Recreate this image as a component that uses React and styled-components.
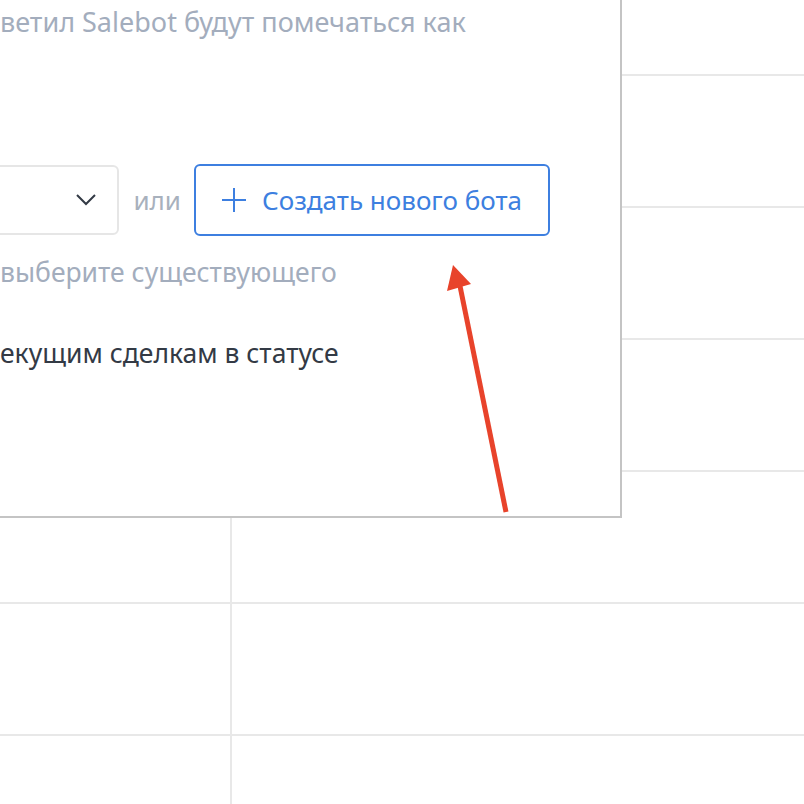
import styled, { createGlobalStyle } from "styled-components";

const GlobalStyle = createGlobalStyle`
    html, body {
        margin: 0;
        padding: 0;
        background: #ffffff;
        overflow: hidden;
    }
    body {
        font-family: "Noto Sans", "Open Sans", sans-serif;
        color: #333a45;
    }
`;

const Page = styled.div`
    position: relative;
    width: 804px;
    height: 804px;
    overflow: hidden;
`;

// pipeline board behind the dialog
const Board = styled.div`
    display: grid;
    grid-template-columns: 230px 1fr;
    grid-template-rows: 74px repeat(6, 130px);
    gap: 2px;
    background: #e8e8e8;
`;

const Cell = styled.div`
    background: #ffffff;
`;

const Dialog = styled.div`
    position: absolute;
    left: -300px;
    top: -60px;
    width: 922px;
    box-sizing: border-box;
    background: #ffffff;
    border: 2px solid #c4c4c4;
    padding: 62px 70px 145px 58px;
`;

const Text = styled.div`
    font-size: ${(p) => p.$size || 27}px;
    line-height: ${(p) => p.$lh || 36}px;
    color: ${(p) => (p.$muted ? "#a3adbd" : "#333a45")};
    margin-top: ${(p) => p.$mt || 0}px;
    white-space: nowrap;
`;

// leading part of a sentence that sits past the dialog's left edge
const Lead = styled.span`
    display: inline-block;
    width: 240px;
    overflow: hidden;
    text-align: right;
    vertical-align: top;
    white-space: nowrap;
    direction: rtl;
`;

const BotRow = styled.div`
    display: flex;
    align-items: center;
    gap: 13px;
    margin-top: 124px;
    height: 72px;
`;

const Select = styled.div`
    flex: 1;
    height: 70px;
    box-sizing: border-box;
    border: 2px solid #e6e6e6;
    border-radius: 6px;
    display: flex;
    align-items: center;
    justify-content: flex-end;
    padding-right: 21px;
`;

const Or = styled.span`
    font-size: 26px;
    color: #a8b1bd;
    margin-left: 1px;
`;

const OutlineButton = styled.button`
    width: 356px;
    height: 72px;
    box-sizing: border-box;
    border: 2px solid #3d7fe0;
    border-radius: 6px;
    background: #ffffff;
    color: #3d7fe0;
    font-family: "Noto Sans", "Open Sans", sans-serif;
    font-size: 26px;
    display: flex;
    align-items: center;
    justify-content: center;
    gap: 16px;
    padding: 0;
    cursor: pointer;
`;

const Annotation = styled.svg`
    position: absolute;
    left: 0;
    top: 0;
    pointer-events: none;
`;

const Chevron = () => (
    <svg width="20" height="12" viewBox="0 0 20 12">
        <polyline points="1,1 10,10 19,1" fill="none" stroke="#333a45" strokeWidth="2" />
    </svg>
);

const Plus = () => (
    <svg width="24" height="24" viewBox="0 0 24 24">
        <path d="M12 0 V24 M0 12 H24" stroke="#3d7fe0" strokeWidth="2" />
    </svg>
);

export default function App() {
    const cells = Array.from({ length: 14 });

    return (
        <Page>
            <GlobalStyle />
            <Board>
                {cells.map((_, i) => (
                    <Cell key={i} />
                ))}
            </Board>

            <Dialog>
                <Text $muted>
                    <Lead>Сделки, на которые от</Lead>ветил Salebot будут помечаться как
                </Text>

                <BotRow>
                    <Select>
                        <Chevron />
                    </Select>
                    <Or>или</Or>
                    <OutlineButton>
                        <Plus />
                        Создать нового бота
                    </OutlineButton>
                </BotRow>

                <Text $muted $size={26.5} $lh={34} $mt={19}>
                    <Lead>Создайте бота или </Lead>выберите существующего
                </Text>

                <Text $size={26.5} $mt={46}>
                    <Lead>Применить к т</Lead>екущим сделкам в статусе
                </Text>
            </Dialog>

            <Annotation width="804" height="804" viewBox="0 0 804 804">
                <line x1="506" y1="512" x2="460" y2="286" stroke="#e8432b" strokeWidth="5" />
                <polygon points="453,265 447,291 471,284" fill="#e8432b" />
            </Annotation>
        </Page>
    );
}
